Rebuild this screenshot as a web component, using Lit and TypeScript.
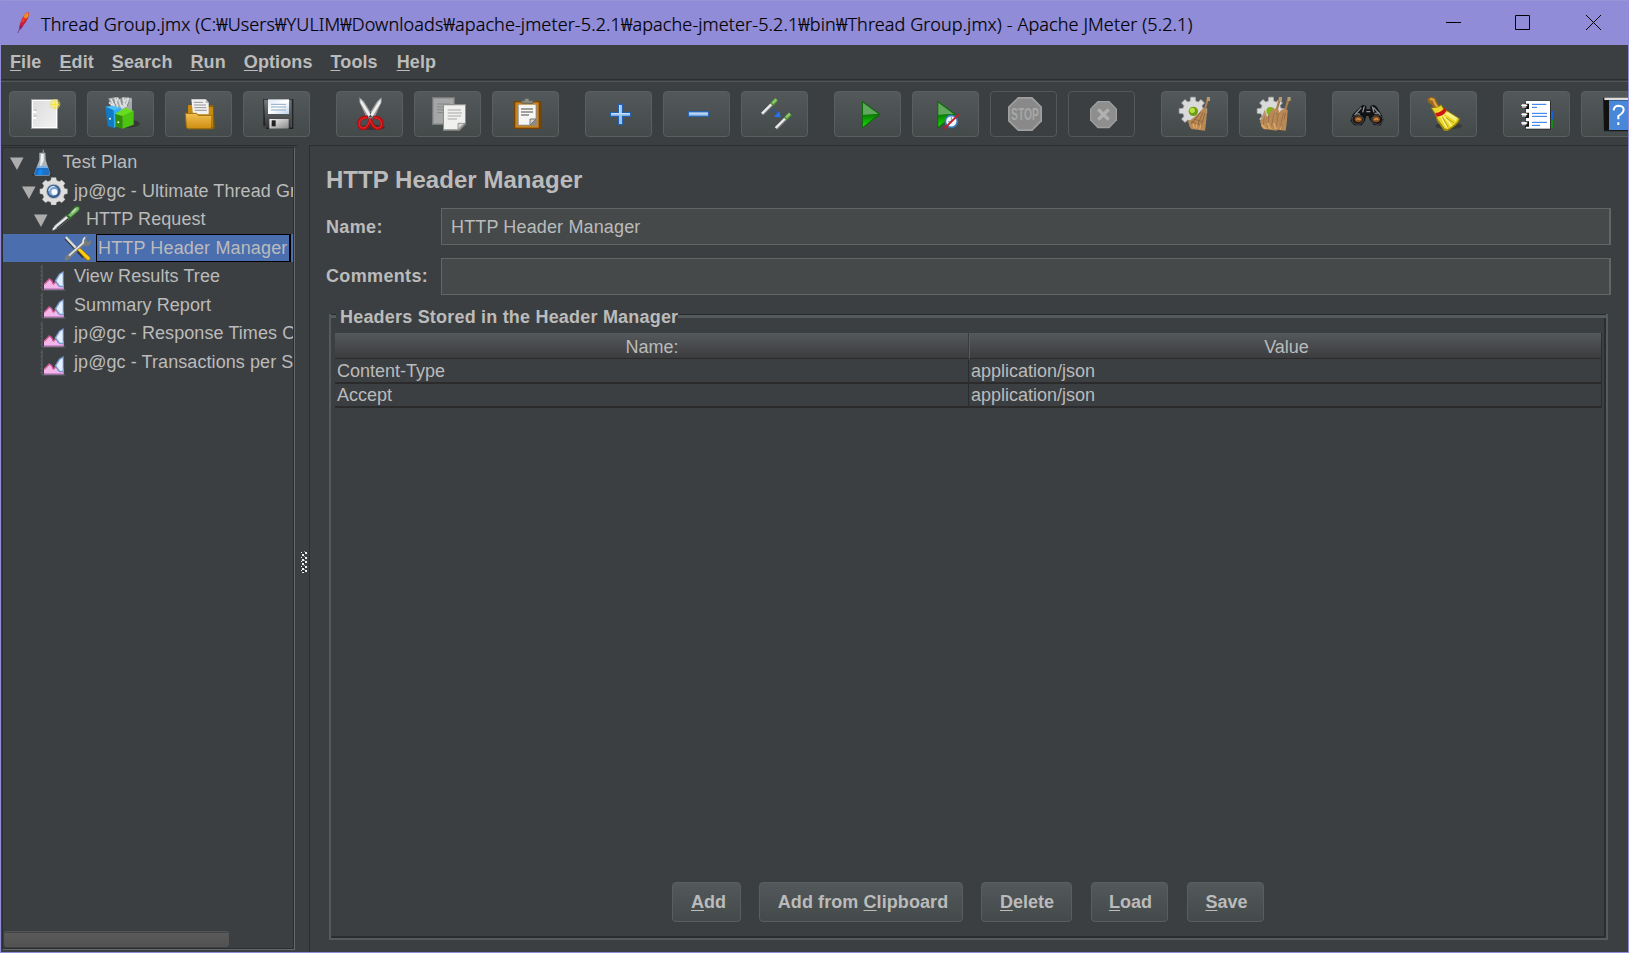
import { LitElement, html, css, svg } from "lit";
import { customElement, property } from "lit/decorators.js";
import { classMap } from "lit/directives/class-map.js";

/* Toolbar glyphs are drawn on a 201 x 138 grid: three units per pixel of a 67 x 46 button. */
const pencil = (t: string) => svg`<g transform=${t}><path d="M0 0L30-30" stroke="#77797a" stroke-width="11"/><path d="M-1-1L29-31" stroke="#ebebeb" stroke-width="7"/><path d="M28-28L43-44" stroke="#4f8a35" stroke-width="13"/><path d="M30-32L42-44" stroke="#8ccb6c" stroke-width="7"/></g>`;

/* Eight-toothed wheel around the origin. */
const gearPath = (outer: number, inner: number) => {
  const points: string[] = [];
  for (let i = 0; i < 8; i++) {
    const a = (i * Math.PI) / 4;
    for (const [d, r] of [[-0.26, inner], [-0.17, outer], [0.17, outer], [0.26, inner]]) {
      points.push(`${(Math.cos(a + d) * r).toFixed(1)} ${(Math.sin(a + d) * r).toFixed(1)}`);
    }
  }
  return `M${points.join("L")}z`;
};

const broom = svg`<path d="M92 19L99 20 88 58 82 56z" fill="#a87b4c"/><rect x="92" y="18" width="9" height="12" fill="#b59a78"/><path d="M80 52L92 57Q90 95 86 119L45 114Q36 106 38 98L34 92Q62 76 80 52z" fill="#b98a58"/><path d="M74 62L48 94M80 64L60 110M86 66L72 114M66 74l-24 26M52 84l26 8M44 92l34 12" stroke="#8d6238" stroke-width="2.5"/><path d="M50 98l4 14M62 98l-2 14M74 100l-4 15" stroke="#e3aa66" stroke-width="4"/>`;

const icons: Record<string, unknown> = {
  blank: svg`<rect x="66" y="24" width="81" height="90" fill="#9a9b98"/><rect x="69" y="27" width="75" height="84" fill="#fff"/><path d="M72 30h69v78H72z" fill="url(#paper)"/><path d="M72 60h10v6H72zM72 78h10v6H72z" fill="#fff"/><path d="M76 57h6M76 75h6" stroke="#aaa" stroke-width="3"/><circle cx="138" cy="40" r="16" fill="#eee05a" opacity=".55"/><circle cx="138" cy="40" r="9" fill="#f8f4a0"/><path d="M126 40h24M138 28v24" stroke="#f3e53e" stroke-width="4"/>`,
  templates: svg`<ellipse cx="118" cy="98" rx="40" ry="12" fill="#222" opacity=".5"/><path d="M64 22l26-4 8 6 12-6 25 3v36l-25 18-36-25z" fill="#a4a8a9"/><path d="M72 24l10 24M84 20l8 28M96 26l6 20M108 20l6 26M124 20l-8 28M94 20l-16 28M118 22l-16 28M66 34l20 18M130 26l-24 26" stroke="#dcdedf" stroke-width="5"/><path d="M78 24l8 20M102 20l4 22M128 26l-8 20" stroke="#84898b" stroke-width="3"/><path d="M55 47l26 10v54L62 105z" fill="#1279c5"/><path d="M80 57l21-8v48l-20 14z" fill="#35aef0"/><path d="M55 47l22-3 23 6-20 8z" fill="#4bc0f8"/><path d="M84 68l22 6v39l-20-6z" fill="#2f8e05"/><path d="M106 74l34-15v42l-34 12z" fill="#4bc510"/><path d="M84 68l32-18 24 10-34 15z" fill="#68dd20"/><circle cx="94" cy="94" r="3" fill="#fff"/><circle cx="69" cy="83" r="3" fill="#fff"/>`,
  open: svg`<path d="M69 42h76l4 65q0 8-8 8H72z" fill="#8d6209"/><path d="M69 42h15l4 6h56v60H69z" fill="#c88a0e"/><path d="M79 25h44l8 10v35H84z" fill="#f1f1f1"/><path d="M122 25v11h10z" fill="#b5b5b5"/><path d="M86 34h28M87 42h36M88 50h36M89 58h36" stroke="#969696" stroke-width="3"/><path d="M61 67h34l5 6h41l-1 35q0 5-5 5H71q-6 0-7-6z" fill="url(#gold)" stroke="#9b6b0d" stroke-width="3"/>`,
  save: svg`<path d="M61 24h90v90H67l-6-6z" fill="#222324"/><path d="M63 26h84v84H67z" fill="url(#steel)"/><rect x="75" y="25" width="63" height="44" fill="url(#label)"/><path d="M84 40h45M84 48h45M84 57h45" stroke="#8ea9c3" stroke-width="3"/><path d="M79 84h58v29H79z" fill="url(#shutter)"/><path d="M86 88h12v18H86z" fill="#202122"/><path d="M61 107h6v7M145 26v82" stroke="#555" stroke-width="3" fill="none"/>`,
  cut: svg`<ellipse cx="110" cy="109" rx="37" ry="8" fill="#222" opacity=".5"/><path d="M70 19l14 12 29 47-6 8-15-6-22-47zM137 19l-14 12-31 49 9 6 14-6 22-47z" fill="#9b9c9b"/><path d="M73 23l9 12 27 44-9 2-27-46zM134 23l-9 12-28 45 8 4 29-48z" fill="#efefed"/><path d="M96 79q-26-3-28 20 2 16 17 13 14-3 18-29 5 26 20 29 15 2 16-14-2-20-27-19" fill="none" stroke="#b50c12" stroke-width="10"/><path d="M94 80q-24 0-25 20 3 12 15 11 12-4 18-26 7 23 20 26 14 1 15-12-2-18-23-19" fill="none" stroke="#e02323" stroke-width="4"/>`,
  copy: svg`<path d="M54 18h69v84H54z" fill="#77797a"/><path d="M58 22h61v76H58z" fill="#a5a7a7"/><path d="M69 39h38M69 48h38M69 56h25M69 65h25" stroke="#858787" stroke-width="3"/><path d="M87 39h69v60l-19 20H87z" fill="#8d8e8a"/><path d="M90 43h63v52l-19 20H90z" fill="#f0f0ee"/><path d="M101 57h40M101 66h43M101 75h40M101 84h28" stroke="#a7a7a5" stroke-width="3"/><path d="M132 115v-18h21z" fill="#d4d4d0" stroke="#777" stroke-width="2"/>`,
  paste: svg`<path d="M66 30h82v84H66z" fill="#744405"/><path d="M70 34h70v76H70z" fill="#c98422"/><path d="M77 41h57v63H77z" fill="#8b8c86"/><path d="M80 41h51v43L113 101H80z" fill="#f5f5f3"/><path d="M87 54h36M87 63h36M87 72h24" stroke="#85857f" stroke-width="4"/><path d="M114 102V84h18z" fill="#d0d0cc" stroke="#77776f" stroke-width="3"/><path d="M88 36v-7h10v-7h13v7h12v8z" fill="#8c8f86" stroke="#5d6059" stroke-width="3"/>`,
  plus: svg`<path d="M99 38h15v25h24v15h-24v24H99V78H75V63h24z" fill="#2461ae"/><path d="M102 42h9v24h24v8h-24v25h-9V74H78v-8h24z" fill="#9dc4ef"/><path d="M104 42v25M79 68h55" stroke="#cce1f7" stroke-width="3" fill="none"/>`,
  minus: svg`<path d="M75 60h63v18H75z" fill="#2b65ae"/><path d="M78 64h57v10H78z" fill="#a0c4ec"/><path d="M79 67h55" stroke="#c6def6" stroke-width="3"/>`,
  toggle: svg`${pencil("translate(64 69)")}${pencil("translate(105 112)")}<path d="M92 57q12 2 15 9" stroke="#1855be" stroke-width="4" stroke-dasharray="7 3" fill="none"/><path d="M99 77l16-16 4 18z" fill="#2474f2"/>`,
  start: svg`<path d="M84 29L140 70 84 113z" fill="#0d6a08"/><path d="M87 35L133 69 87 72z" fill="#61a75d"/><path d="M87 72l47-2-47 37z" fill="url(#green)"/>`,
  startNoPause: svg`<path d="M76 29L132 70 76 113z" fill="#0d6a08"/><path d="M79 35L125 69 79 72z" fill="#61a75d"/><path d="M79 72l47-2-47 37z" fill="url(#green)"/><circle cx="118" cy="91" r="18" fill="#eef5fb" stroke="#387bb7" stroke-width="5"/><path d="M118 76v16h-10" stroke="#7d9bad" stroke-width="3" fill="none"/><path d="M97 113L140 70" stroke="#c41c25" stroke-width="6"/>`,
  stop: svg`<path d="M84 18h43l29 29v44l-29 29H84L54 91V47z" fill="#a0a0a0"/><path d="M86 23h39l26 26v39l-26 27H86L59 88V49z" fill="#898989"/><text x="105" y="87" text-anchor="middle" font-size="49" textLength="84" lengthAdjust="spacingAndGlyphs" fill="#a7a7a7" font-weight="bold" font-family="Liberation Sans, sans-serif">STOP</text>`,
  shutdown: svg`<path d="M89 30h35l23 23v35l-23 24H89L66 88V53z" fill="#a0a0a0"/><path d="M91 34h32l20 20v33l-20 20H91L70 87V54z" fill="#8e8e8e"/><path d="M91 55l31 31M122 55L91 86" stroke="#b1b1b1" stroke-width="10"/>`,
  clear: svg`<path transform="translate(96 60)" d=${gearPath(42, 31)} fill="#dadada" stroke="#aaa" stroke-width="2"/><circle cx="97" cy="61" r="14" fill="#719b18"/><circle cx="94" cy="58" r="8" fill="#b4e33a"/><g transform="translate(46 0)">${broom}</g>`,
  clearAll: svg`<path transform="translate(96 60)" d=${gearPath(42, 31)} fill="#dadada" stroke="#aaa" stroke-width="2"/><circle cx="94" cy="60" r="12" fill="#80b51e"/><g transform="translate(28 0)">${broom}</g><g transform="translate(54 0)">${broom}</g><path d="M77 56l8 22 18-30 6 27 20-20 7 40-12 16H72L65 88z" fill="#b98a58" opacity=".9"/><path d="M76 76l-4 32M90 70l-4 38M104 68l-6 38M118 66l-6 42M132 70l-8 36" stroke="#9a7047" stroke-width="2.5"/><path d="M68 100l12 14M86 96l8 18M104 96l8 18" stroke="#dfa764" stroke-width="5"/>`,
  search: svg`<path d="M84 49l8-8 11 4v10h12V45l10-4 9 6 15 24 6 16-9 16h-20l-12-15-5-13h-6l-4 14-10 14H67L55 89l8-20z" fill="#101112"/><path d="M68 72l20-22M145 72l-20-22M97 46l-5 18M121 46l5 18M103 62h12M72 67l12 3M128 68l14-3" stroke="#8d9192" stroke-width="4"/><ellipse cx="77" cy="86" rx="17" ry="14" fill="#171615" stroke="#505050" stroke-width="3"/><ellipse cx="136" cy="86" rx="17" ry="14" fill="#171615" stroke="#505050" stroke-width="3"/><ellipse cx="79" cy="85" rx="11" ry="9" fill="#88501f"/><ellipse cx="133" cy="85" rx="11" ry="9" fill="#88501f"/><path d="M73 86q8-6 12 1M127 87q7-8 11 0" stroke="#ce8b4d" stroke-width="5" fill="none"/>`,
  reset: svg`<ellipse cx="116" cy="105" rx="40" ry="10" fill="#222" opacity=".45"/><path d="M53 24l8-6 14 2 6 13 12 22-15 8-14-23q-12-4-11-16z" fill="#9b6818"/><path d="M60 24l10 2 5 12 10 14" stroke="#dda54b" stroke-width="6" fill="none"/><path d="M62 49q19 5 31-9l8 12q27 17 49 31-4 19-38 37l-10-1-21-29-5-17z" fill="#a38c0a"/><path d="M66 51q17 2 27-7l7 11q24 16 46 29-7 15-34 31l-8-3-20-27-6-16z" fill="#ead82c"/><path d="M103 64l35 24M97 70l28 35M92 75l18 34M111 64l30 19" stroke="#faf391" stroke-width="4"/><path d="M108 80l24 16M97 79l18 30" stroke="#b9a114" stroke-width="3"/><path d="M76 66q20-3 27-16l7 8q-7 17-30 19z" fill="#cd1515"/>`,
  functions: svg`<path d="M140 60h10v26h-10z" fill="#1762d9"/><path d="M140 86h10v25h-10z" fill="#168b1c"/><path d="M68 29h76v87H68z" fill="#2e3030"/><path d="M69 30h72v83H69z" fill="#fff"/><path d="M66 38h12v16H66zM66 65h12v16H66zM66 91h12v16H66z" fill="#111"/><path d="M57 39h13v11H57zM57 66h13v11H57zM57 92h13v11H57z" fill="#bbb"/><path d="M55 43h18M55 70h18M55 96h18" stroke="#fff" stroke-width="4"/><path d="M87 40h43M87 49h15M87 67h45M87 76h45M87 94h45M87 103h24" stroke="#2373e9" stroke-width="3"/>`,
  help: svg`<path d="M66 20h80v101H69z" fill="#181a1c"/><path d="M70 20h74v7H70z" fill="#ddd"/><path d="M84 28h64v89H84z" fill="#4988d8"/><path d="M69 28l14 3v85H69z" fill="#111"/><path d="M98 58q1-14 15-14 16 1 15 13-1 9-16 18v10M112 94v8" stroke="#fff" stroke-width="6" fill="none"/>`,
};

const gradients = svg`<defs>
  <linearGradient id="paper" x2="1" y2="1"><stop stop-color="#ddd"/><stop offset="1" stop-color="#f1f1f1"/></linearGradient>
  <linearGradient id="gold" x2="0" y2="1"><stop stop-color="#f0c052"/><stop offset="1" stop-color="#d08d11"/></linearGradient>
  <linearGradient id="steel" x2="0" y2="1"><stop stop-color="#777a7c"/><stop offset="1" stop-color="#333637"/></linearGradient>
  <linearGradient id="label" x2="1" y2="1"><stop stop-color="#dce9f5"/><stop offset=".5" stop-color="#fff"/><stop offset="1" stop-color="#bcd2e8"/></linearGradient>
  <linearGradient id="shutter" x2="1" y2="1"><stop stop-color="#f2f2f2"/><stop offset="1" stop-color="#888"/></linearGradient>
  <linearGradient id="green" x2="0" y2="1"><stop stop-color="#077a04"/><stop offset="1" stop-color="#1bdd08"/></linearGradient>
</defs>`;

/* Tree glyphs use a 90 x 84 grid on a 30 x 28 box. */
const treeIcons: Record<string, unknown> = {
  plan: svg`<g transform="translate(7 4)"><ellipse cx="39" cy="76" rx="32" ry="4" fill="#222" opacity=".6"/><path d="M30 10h18l1 22 14 43-4 4H18l-4-4 16-43z" fill="#aeb4b7"/><path d="M35 13h8v20L32 58z" fill="#eef1f2"/><path d="M24 50h31l7 24-4 4H18l-4-3z" fill="#2170c4"/><path d="M24 50h31l2 6H22z" fill="#7cb1e5"/><path d="M34 59q10 5 4 18H26q-3-9 8-18z" fill="#0d8af5"/><path d="M42 1v12" stroke="#888" stroke-width="4"/></g>`,
  group: svg`<path transform="translate(44 43)" d=${gearPath(42, 34)} fill="#dededd" stroke="#999" stroke-width="1"/><circle cx="44" cy="43" r="23" fill="#b5bac0"/><circle cx="44" cy="43" r="20" fill="#35598c"/><circle cx="43" cy="42" r="15" fill="#7ba0cc"/><circle cx="46" cy="45" r="9" fill="#f4fafd"/><path d="M29 41q5-14 18-13" stroke="#cee1f4" stroke-width="4" fill="none"/>`,
  sampler: svg`<path d="M3 78l8-17 36-32 11 10-35 30z" fill="#8a8d8c"/><path d="M6 74l11-12 33-27" stroke="#ececec" stroke-width="6" fill="none"/><path d="M18 70l34-29" stroke="#222" stroke-width="3"/><path d="M43 31l10-5 18-22q12-5 16 3 2 8-5 13L61 38l-3 7z" fill="#356b31"/><path d="M51 31l22-23q8-4 11 1 1 5-4 9L59 36z" fill="#80ba6f"/><path d="M62 24l13-13" stroke="#c0dfab" stroke-width="5"/>`,
  tools: svg`<path d="M5 9l8 1 4 9 48 48-7 6-46-50-6-5z" fill="#373939"/><path d="M8 9L40 43" stroke="#dadbda" stroke-width="7"/><path d="M62 10l10-6-3 14 6 5 9-5q2 13-9 18H60L18 76q-9 8-14 0 1-8 8-13l41-35z" fill="#777b7b"/><path d="M66 10q-8 8-5 16L18 65" stroke="#e0e1e0" stroke-width="5" fill="none"/><path d="M44 48l8-5 29 25q4 8-2 11-6 3-11-2z" fill="#9d7200"/><path d="M50 48l26 25" stroke="#ffce14" stroke-width="9" stroke-linecap="round"/>`,
  chart: svg`<g transform="translate(-3 3)"><path d="M9 2v76h70" stroke="#747778" stroke-width="2" fill="none"/><path d="M4 10h5M4 22h5M4 34h5M4 46h5M4 58h5M4 70h5" stroke="#666" stroke-width="2"/><path d="M15 76V59l15-15 7 3 5 12 9-7 8 7h15v17z" fill="#f4b5e8"/><path d="M16 61l15-16 7 5 5 10 8-6 9 8" stroke="#cb558e" stroke-width="4" fill="none"/><path d="M47 50L60 29l14-8v49H62q-6-3-11-14z" fill="#7799d2"/><path d="M52 50l11-18 8-5v38h-8z" fill="#e3effc"/><path d="M15 74h58" stroke="#cf8ad2" stroke-width="4"/></g>`,
};

@customElement("tool-button")
class ToolButton extends LitElement {
  @property() icon = "";
  @property({ type: Boolean, reflect: true }) disabled = false;

  static styles = css`
    :host { display: block; flex: none; width: 67px; height: 46px; }
    button { display: block; box-sizing: border-box; width: 67px; height: 46px; padding: 0; border: 1px solid #5b5e5f; border-radius: 4px; background: linear-gradient(#53595b, #44494a); }
    :host([disabled]) button { background: none; border: 1px solid #55585a; }
    svg { display: block; margin: -1px; }
  `;

  render() {
    return html`<button ?disabled=${this.disabled} aria-label=${this.icon}>
      <svg width="67" height="46" viewBox="0 0 201 138" fill="none">${gradients}${icons[this.icon]}</svg>
    </button>`;
  }
}

/* A label whose first occurrence of the mnemonic letter is underlined. */
const mnemonic = (text: string, key: string) => {
  const at = text.indexOf(key);
  return html`${text.slice(0, at)}<span class="key">${key}</span>${text.slice(at + 1)}`;
};

const toolGroups = [
  ["blank", "templates", "open", "save"],
  ["cut", "copy", "paste"],
  ["plus", "minus", "toggle"],
  ["start", "startNoPause", "stop", "shutdown"],
  ["clear", "clearAll"],
  ["search", "reset"],
  ["functions", "help"],
];

const tree = [
  { text: "Test Plan", icon: "plan", level: 0, open: true },
  { text: "jp@gc - Ultimate Thread Group", icon: "group", level: 1, open: true },
  { text: "HTTP Request", icon: "sampler", level: 2, open: true },
  { text: "HTTP Header Manager", icon: "tools", level: 3, selected: true },
  { text: "View Results Tree", icon: "chart", level: 1 },
  { text: "Summary Report", icon: "chart", level: 1 },
  { text: "jp@gc - Response Times Over Time", icon: "chart", level: 1 },
  { text: "jp@gc - Transactions per Second", icon: "chart", level: 1 },
];

const menus: [string, string][] = [["File", "F"], ["Edit", "E"], ["Search", "S"], ["Run", "R"], ["Options", "O"], ["Tools", "T"], ["Help", "H"]];

const actions: [string, string, string][] = [
  ["Add", "A", "add"],
  ["Add from Clipboard", "C", "clip"],
  ["Delete", "D", "delete"],
  ["Load", "L", "load"],
  ["Save", "S", "save"],
];

@customElement("app-root")
class AppRoot extends LitElement {
  static styles = css`
    :host { display: block; height: 953px; overflow: hidden; font: 18px "Liberation Sans", Arial, sans-serif; color: #bbb; }
    * { box-sizing: border-box; }
    svg { display: block; flex: none; }
    .window { height: 953px; display: flex; flex-direction: column; background: #3c3f41; border: 1px solid #908cd8; border-top-color: #9894d8; overflow: hidden; }
    .title { height: 44px; flex: none; display: flex; align-items: center; background: #908cd8; color: #000; padding: 0 27px 1px 14px; }
    .title h1 { flex: 1; margin: 2px 0 0 11px; font: 300 18px "Noto Sans", "Noto Sans CJK KR", sans-serif; white-space: nowrap; letter-spacing: 0.107px; -webkit-text-stroke: 0.2px #000; }
    .controls { display: flex; gap: 54px; }
    .controls svg:last-child { margin-left: 2px; }
    .menu { height: 34px; flex: none; display: flex; gap: 18px; padding: 2px 9px 0; align-items: center; font-weight: bold; }
    .menu span.item { height: 22px; line-height: 21px; letter-spacing: 0.1px; }
    .menu span.item:last-child { margin-left: 1px; }
    .key { text-decoration: underline; text-decoration-thickness: 1px; text-underline-offset: 2px; }
    .toolbar { height: 66px; flex: none; border-top: 1px solid #2b2d2e; box-shadow: inset 0 1px #3c3f41, inset 0 2px #515658; display: flex; gap: 26px; padding: 11px 0 0 8px; overflow: hidden; }
    .group { display: flex; gap: 11px; flex: none; }
    .main { flex: 1; min-height: 0; display: flex; }
    .side { width: 296px; flex: none; border-top: 1px solid #292c2d; padding: 1px 2px 2px 1px; }
    .tree { height: 802px; width: 292px; border: 1px solid #2b2d2e; box-shadow: 1px 1px #66696a; display: flex; flex-direction: column; overflow: hidden; }
    .row { height: 28.57px; flex: none; display: flex; align-items: center; white-space: nowrap; letter-spacing: 0.08px; }
    .row.level0 { padding-left: 7px; } .row.level1 { padding-left: 19px; } .row.level2 { padding-left: 31px; } .row.level3 { padding-left: 40px; }
    .row.selected { background: #4b6eaf; letter-spacing: 0.14px; }
    .arrow { width: 14px; height: 28px; margin-right: 3px; flex: none; }
    .leaf .arrow { width: 17px; }
    .caption { margin-left: 5px; height: 24px; line-height: 24px; }
    .leaf .caption { margin: 0 0 0.5px 4px; }
    .level0 .caption { margin-left: 5.5px; }
    .leaf.selected .caption { margin: 0 0 0 3px; border: 1px solid #000; border-right-width: 2px; height: 28px; line-height: 26px; padding: 0 2px 0 1px; }
    .leaf:not(.selected) .arrow { margin-right: 0; width: 18px; }
    .scroll { margin: auto 0 1px 1px; width: 225px; height: 16px; flex: none; border-radius: 3px; border: 1px solid #555; background: linear-gradient(#3f4142 1px, #5a5a5a 1px, #525252); }
    .divider { width: 12px; flex: none; display: flex; align-items: center; justify-content: center; }
    .divider svg { margin: 27px 0 0 2px; }
    .content { flex: 1; border: 1px solid #2b2d2e; border-right: 0; border-bottom: 0; padding: 19px 17px 12px 16px; display: flex; flex-direction: column; min-width: 0; }
    h2 { margin: 0 0 13px; font-size: 24px; line-height: 30px; height: 30px; letter-spacing: 0.04px; }
    .field { display: grid; grid-template-columns: 115px 1fr; height: 37px; margin-bottom: 13px; align-items: center; font-weight: bold; letter-spacing: 0.35px; }
    .field .input { height: 37px; line-height: 36px; border: 1px solid #646464; border-right-width: 2px; background: #45494a; padding-left: 9px; font-weight: normal; letter-spacing: 0.14px; }
    .field .label { line-height: 22px; padding-bottom: 1px; }
    .field .label.name { padding: 1px 0 0; }
    .box { flex: 1; display: flex; flex-direction: column; margin: 6px 3px 0 3px; border: 2px solid #555a5c; border-top: 0; box-shadow: inset -2px -2px #2b2d2e; padding: 0 4px 16px 4px; }
    .legend { display: flex; margin: 0 -4px 8px -4px; height: 11px; font-weight: bold; letter-spacing: 0.2px; }
    .legend::before, .legend::after { content: ""; height: 3px; border-top: 1px solid #292c2d; background: #555a5c; }
    .legend::before { width: 5px; } .legend::after { flex: 1; }
    .legend span { line-height: 22px; margin: -8px 0 0 4px; white-space: nowrap; }
    .grid { display: grid; grid-template-columns: 634px 1fr; border-right: 1px solid #2b2d2e; }
    .head { height: 26px; margin-bottom: 1px; background: linear-gradient(#54595c, #3c3c3e); border-bottom: 1px solid #2b2b2b; text-align: center; line-height: 28px; padding-left: 2px; }
    .head.first { border-right: 1px solid #393c3e; padding-left: 1px; }
    .head:not(.first) { border-left: 1px solid #5a5d5e; }
    .cell { height: 24px; border-bottom: 2px solid #2b2b2b; line-height: 23px; padding-left: 2px; }
    .cell.first { border-right: 1px solid #2b2b2b; }
    .actions { margin-top: auto; display: flex; justify-content: center; gap: 18px; padding-right: 1px; }
    .action { height: 40px; flex: none; border: 1px solid #5b5e5f; border-radius: 4px; background: linear-gradient(#53595b, #44494a); color: #bbb; font: bold 18px "Liberation Sans", Arial, sans-serif; padding: 0 0 0 4px; text-align: center; }
    .add { width: 69px; } .clip { width: 204px; letter-spacing: 0.08px; } .delete { width: 91px; padding-left: 1px; } .load { width: 77px; margin-left: 1px; padding-left: 2px; } .save { width: 77px; margin-left: 1px; padding-left: 2px; }
  `;

  private renderRow(n: { text: string; icon: string; level: number; open?: boolean; selected?: boolean }) {
    const classes = { row: true, ["level" + n.level]: true, selected: !!n.selected, leaf: !n.open };
    return html`<div class=${classMap(classes)}>
      <svg class="arrow" width="14" height="28" viewBox="0 0 14 28">${n.open ? svg`<path d="M0 9.5h13.5L7 22z" fill="#adadad"/>` : ""}</svg>
      <svg width="30" height="28" viewBox="0 0 90 84">${treeIcons[n.icon]}</svg>
      <span class="caption">${n.text}</span>
    </div>`;
  }

  render() {
    return html`<div class="window">
      <header class="title">
        <svg width="15" height="24" viewBox="0 0 45 72"><path d="M8 66L16 50" stroke="#65246d" stroke-width="2"/><path d="M13 48Q18 21 35 3l6 1q2 14-8 29L20 50z" fill="#c5203b"/><path d="M30 8l9-6 2 12-7 9-9-4z" fill="#f28b20"/><path d="M24 19l9 5-8 10-8 1z" fill="#e63c2c"/><path d="M14 43l10 2-6 10-6 1z" fill="#92246b"/></svg>
        <h1>Thread Group.jmx (C:₩Users₩YULIM₩Downloads₩apache-jmeter-5.2.1₩apache-jmeter-5.2.1₩bin₩Thread Group.jmx) - Apache JMeter (5.2.1)</h1>
        <div class="controls">
          <svg width="15" height="15"><path d="M0 7.5h15" stroke="#000"/></svg>
          <svg width="15" height="15"><path d="M.5.5h14v14H.5z" stroke="#000" fill="none"/></svg>
          <svg width="15" height="15"><path d="M0 0l15 15M15 0L0 15" stroke="#000"/></svg>
        </div>
      </header>
      <nav class="menu">${menus.map(([t, k]) => html`<span class="item">${mnemonic(t, k)}</span>`)}</nav>
      <div class="toolbar">
        ${toolGroups.map((g) => html`<div class="group">${g.map((i) => html`<tool-button icon=${i} ?disabled=${i === "stop" || i === "shutdown"}></tool-button>`)}</div>`)}
      </div>
      <div class="main">
        <aside class="side"><div class="tree">${tree.map((n) => this.renderRow(n))}<div class="scroll"></div></div></aside>
        <div class="divider">
          <svg width="6" height="22" shape-rendering="crispEdges">${[0, 1, 2, 3, 4].map((i) => svg`<g transform="translate(0 ${i * 4.5})"><path d="M0 1h1v1H0zM4 1h2v2H4zM1 3h2v2H1z" fill="#eee"/><path d="M3 0h1v1H3z" fill="#999"/><path d="M2 2h2v1H2z" fill="#222"/></g>`)}</svg>
        </div>
        <section class="content">
          <h2>HTTP Header Manager</h2>
          <div class="field"><span class="label name">Name:</span><div class="input">HTTP Header Manager</div></div>
          <div class="field"><span class="label">Comments:</span><div class="input"></div></div>
          <div class="box">
            <div class="legend"><span>Headers Stored in the Header Manager</span></div>
            <div class="grid">
              <div class="head first">Name:</div><div class="head">Value</div>
              <div class="cell first">Content-Type</div><div class="cell">application/json</div>
              <div class="cell first">Accept</div><div class="cell">application/json</div>
            </div>
            <div class="actions">${actions.map(([t, k, c]) => html`<button class="action ${c}">${mnemonic(t, k)}</button>`)}</div>
          </div>
        </section>
      </div>
    </div>`;
  }
}
